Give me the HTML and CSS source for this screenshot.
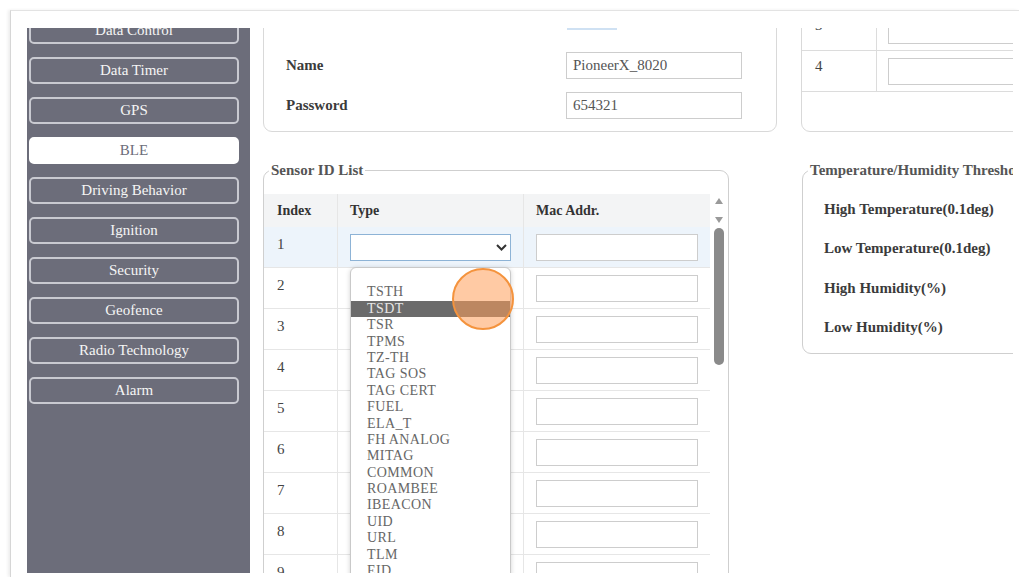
FILE: index.html
```html
<!DOCTYPE html>
<html lang="en">
<head>
<meta charset="utf-8">
<title>BLE Settings</title>
<link rel="stylesheet" href="styles.css">
</head>
<body>
<div class="frame">
  <div class="viewport">
    <nav class="sidebar">
      <div class="menu">
        <div class="menu-btn">Data Control</div>
        <div class="menu-btn">Data Timer</div>
        <div class="menu-btn">GPS</div>
        <div class="menu-btn active">BLE</div>
        <div class="menu-btn">Driving Behavior</div>
        <div class="menu-btn">Ignition</div>
        <div class="menu-btn">Security</div>
        <div class="menu-btn">Geofence</div>
        <div class="menu-btn">Radio Technology</div>
        <div class="menu-btn">Alarm</div>
      </div>
    </nav>

    <main class="main">
      <div class="panels">
        <section class="panel account">
          <div class="form-row"><span class="label"></span><span class="focus-line"></span></div>
          <div class="form-row"><span class="label">Name</span><div class="input">PioneerX_8020</div></div>
          <div class="form-row"><span class="label">Password</span><div class="input">654321</div></div>
        </section>
        <section class="panel slots">
          <div class="slot-row"><span class="slot-idx">3</span><span class="slot-cell"><span class="input wide"></span></span></div>
          <div class="slot-row"><span class="slot-idx">4</span><span class="slot-cell"><span class="input wide"></span></span></div>
        </section>
      </div>

      <div class="groups">
        <fieldset class="group sensors">
          <legend>Sensor ID List</legend>
          <div class="sensor-body">
            <div class="sensor-table">
              <div class="trow head">
                <div class="c idx">Index</div>
                <div class="c type">Type</div>
                <div class="c mac">Mac Addr.</div>
              </div>
              <div class="trow current">
                <div class="c idx num">1</div>
                <div class="c type open">
                  <div class="select"><svg width="11" height="7" viewBox="0 0 11 7"><path d="M1 1 L5.5 5.5 L10 1" fill="none" stroke="#333" stroke-width="2"/></svg></div>
                  <div class="dropdown">
                    <div class="opt">&nbsp;</div>
                    <div class="opt">TSTH</div>
                    <div class="opt hl">TSDT</div>
                    <div class="opt">TSR</div>
                    <div class="opt">TPMS</div>
                    <div class="opt">TZ-TH</div>
                    <div class="opt">TAG SOS</div>
                    <div class="opt">TAG CERT</div>
                    <div class="opt">FUEL</div>
                    <div class="opt">ELA_T</div>
                    <div class="opt">FH ANALOG</div>
                    <div class="opt">MITAG</div>
                    <div class="opt">COMMON</div>
                    <div class="opt">ROAMBEE</div>
                    <div class="opt">IBEACON</div>
                    <div class="opt">UID</div>
                    <div class="opt">URL</div>
                    <div class="opt">TLM</div>
                    <div class="opt">EID</div>
                  </div>
                </div>
                <div class="c mac"><div class="input mac-input"></div></div>
              </div>
              <div class="trow"><div class="c idx num">2</div><div class="c type"><div class="select"></div></div><div class="c mac"><div class="input mac-input"></div></div></div>
              <div class="trow"><div class="c idx num">3</div><div class="c type"><div class="select"></div></div><div class="c mac"><div class="input mac-input"></div></div></div>
              <div class="trow"><div class="c idx num">4</div><div class="c type"><div class="select"></div></div><div class="c mac"><div class="input mac-input"></div></div></div>
              <div class="trow"><div class="c idx num">5</div><div class="c type"><div class="select"></div></div><div class="c mac"><div class="input mac-input"></div></div></div>
              <div class="trow"><div class="c idx num">6</div><div class="c type"><div class="select"></div></div><div class="c mac"><div class="input mac-input"></div></div></div>
              <div class="trow"><div class="c idx num">7</div><div class="c type"><div class="select"></div></div><div class="c mac"><div class="input mac-input"></div></div></div>
              <div class="trow"><div class="c idx num">8</div><div class="c type"><div class="select"></div></div><div class="c mac"><div class="input mac-input"></div></div></div>
              <div class="trow"><div class="c idx num">9</div><div class="c type"><div class="select"></div></div><div class="c mac"><div class="input mac-input"></div></div></div>
            </div>
            <div class="scroll">
              <span class="arrow up"></span>
              <span class="arrow down"></span>
              <span class="thumb"></span>
            </div>
          </div>
        </fieldset>

        <fieldset class="group thresholds">
          <legend>Temperature/Humidity Threshold</legend>
          <div class="th-row"><span class="label">High Temperature(0.1deg)</span></div>
          <div class="th-row"><span class="label">Low Temperature(0.1deg)</span></div>
          <div class="th-row"><span class="label">High Humidity(%)</span></div>
          <div class="th-row"><span class="label">Low Humidity(%)</span></div>
        </fieldset>
      </div>
    </main>
  </div>
</div>
<div class="touch"></div>
</body>
</html>
```
FILE: styles.css
```css
* { box-sizing: border-box; }

html, body {
  margin: 0;
  background: #fff;
}

body {
  font-family: "Liberation Serif", "Times New Roman", serif;
  color: #333;
  position: relative;
}

/* outer window frame */
.frame {
  margin: 10px 0 0 10px;
  width: 1009px;
  height: 567px;
  padding: 17px 0 0 16px;
  border-top: 1px solid #e3e3e3;
  border-left: 1px solid #d6d6d6;
  box-shadow: -2px 0 3px rgba(0, 0, 0, 0.07);
}

.viewport {
  width: 986px;
  height: 545px;
  overflow: hidden;
  display: flex;
  align-items: flex-start;
}

/* left navigation */
.sidebar {
  flex: 0 0 223px;
  height: 545px;
  background: #6c6d7a;
}

.menu {
  display: flex;
  flex-direction: column;
  gap: 13px;
  width: 210px;
  margin: -11px 0 0 2px;
}

.menu-btn {
  height: 27px;
  border: 2px solid #c9cad1;
  border-radius: 5px;
  color: #f5f5f5;
  font-size: 15px;
  line-height: 23px;
  text-align: center;
}

.menu-btn.active {
  background: #fff;
  border-color: #fff;
  color: #6c6d7a;
}

/* content column */
.main {
  flex: 1 0 0;
  min-width: 0;
  margin-top: -30px;
  padding-left: 13px;
}

.panels {
  display: flex;
  gap: 24px;
}

.panel {
  flex: none;
  border: 1px solid #d9d9d9;
  border-radius: 9px;
  background: #fff;
}

.account {
  width: 514px;
  padding: 6px 34px 6px 22px;
}

.form-row {
  display: grid;
  grid-template-columns: 280px 176px;
  align-items: center;
  height: 40px;
}

.label {
  font-weight: bold;
  font-size: 15px;
  color: #3b3b3b;
  white-space: nowrap;
}

.input {
  display: block;
  height: 27px;
  border: 1px solid #cdcdcd;
  background: #fff;
  font-size: 15px;
  line-height: 25px;
  color: #555;
  padding: 0 6px;
}

.focus-line {
  grid-column: 2;
  align-self: end;
  width: 50px;
  height: 2px;
  margin: 0 0 15px 1px;
  background: #cfe1f3;
}

.slots {
  width: 320px;
  padding: 11px 0 39px;
}

.slot-row {
  display: grid;
  grid-template-columns: 74px 1fr;
  height: 41px;
  border-bottom: 1px solid #dcdcdc;
}

.slot-idx {
  padding: 7px 0 0 13px;
  font-size: 15px;
  color: #444;
}

.slot-cell {
  border-left: 1px solid #dcdcdc;
  padding-left: 11px;
  display: flex;
  align-items: center;
}

.input.wide { width: 250px; }

/* field groups */
.groups {
  display: flex;
  align-items: flex-start;
  gap: 73px;
  margin-top: 30px;
}

.group {
  margin: 0;
  min-width: 0;
  border: 1px solid #cfcfcf;
  border-radius: 9px;
  padding: 15px 0 0;
}

.group legend {
  margin-left: 5px;
  padding: 0 2px;
  font-weight: bold;
  font-size: 15px;
  line-height: 17px;
  color: #555;
  white-space: nowrap;
}

.sensors {
  flex: none;
  width: 466px;
}

.sensor-body {
  display: flex;
}

.sensor-table {
  flex: none;
  width: 446px;
}

.trow {
  display: grid;
  grid-template-columns: 73px 186px 187px;
  height: 41px;
  border-bottom: 1px solid #e6e6e6;
}

.trow.head {
  height: 33px;
  border-bottom: none;
  background: #f3f4f5;
}

.trow.current { background: #edf4fb; }

.c {
  display: flex;
  align-items: center;
  padding-left: 12px;
}

.c.idx { padding-left: 13px; }

.c.type,
.c.mac { border-left: 1px solid #e6e6e6; }

.head .c {
  font-weight: bold;
  font-size: 14px;
  color: #333;
}

.c.num {
  align-items: flex-start;
  padding-top: 9px;
  font-size: 15px;
  color: #444;
}

.c.open { position: relative; }

.select {
  width: 161px;
  height: 27px;
  border: 1px solid #c9c9c9;
  background: #fff;
  display: flex;
  align-items: center;
  justify-content: flex-end;
  padding-right: 3px;
}

.open .select { border-color: #8db3d6; }

.mac-input { width: 162px; }

/* open option list of the first Type select */
.dropdown {
  position: absolute;
  top: 40px;
  left: 12px;
  z-index: 2;
  width: 161px;
  height: 330px;
  background: #fff;
  border: 1px solid #c9c9c9;
  border-radius: 6px 6px 0 0;
  box-shadow: 0 1px 5px rgba(0, 0, 0, 0.18);
}

.opt {
  height: 16.4px;
  line-height: 16.4px;
  padding-left: 16px;
  font-size: 14px;
  letter-spacing: 0.4px;
  color: #666;
  white-space: nowrap;
}

.opt.hl {
  background: #6b6b6b;
  color: #e6e6e6;
}

/* scrollbar of the sensor list */
.scroll {
  flex: none;
  width: 18px;
  display: flex;
  flex-direction: column;
  align-items: center;
  padding-top: 4px;
}

.arrow {
  width: 0;
  height: 0;
  border-left: 4px solid transparent;
  border-right: 4px solid transparent;
}

.arrow.up { border-bottom: 6px solid #9a9a9a; }

.arrow.down {
  margin-top: 13px;
  border-top: 6px solid #9a9a9a;
}

.thumb {
  width: 10px;
  height: 137px;
  margin-top: 5px;
  border-radius: 5px;
  background: #8a8a8a;
}

.thresholds {
  flex: none;
  width: 340px;
  padding: 11px 0 6px;
}

.th-row {
  height: 39.3px;
  display: flex;
  align-items: center;
  padding-left: 21px;
}

/* touch indicator */
.touch {
  position: absolute;
  left: 452px;
  top: 268px;
  width: 62px;
  height: 62px;
  z-index: 5;
  border-radius: 50%;
  border: 2.5px solid #f4933d;
  background: rgba(255, 158, 90, 0.55);
}
```
